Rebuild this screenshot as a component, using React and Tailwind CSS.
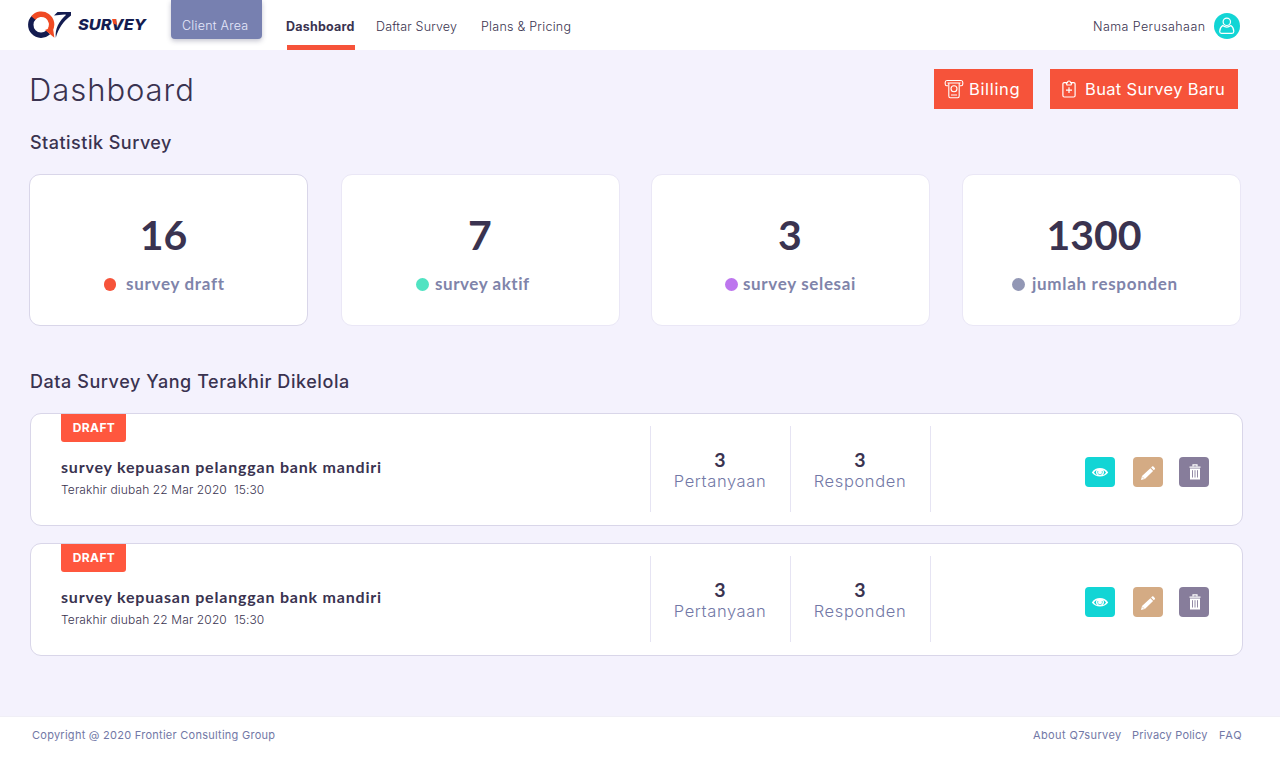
const inter = "font-['Inter',sans-serif]";
const lato = "font-['Lato',sans-serif]";

function Logo() {
  return (
    <svg width="120" height="28" viewBox="27 11 120 28" className="block shrink-0" aria-label="Q7 Survey">
      <g fill="none" strokeWidth="5.4">
        <path d="M34 17.4A10.3 10.3 0 1 0 48.2 32.4" stroke="#141c50" />
        <path d="M33.3 18A10.3 10.3 0 0 1 50 30" stroke="#f04a23" />
      </g>
      <path d="M45 30L52.8 27L54.4 37.8Z" fill="#f04a23" />
      <path d="M54 15.4L57.5 12H71V15.4C63.5 21 58.2 28.5 55.8 37.8C54.8 29 59 21 66.2 14.8L64.5 14.6Z" fill="#141c50" />
      <text x="78" y="30.2" textLength="68" lengthAdjust="spacingAndGlyphs" fontFamily="Inter, sans-serif" fontStyle="italic" fontWeight="800" fontSize="14.8" fill="#141c50">SURVEY</text>
      <path d="M112.2 19H116.2L117 25L113.2 23.4Z" fill="#f04a23" />
    </svg>
  );
}

function BillingIcon() {
  return (
    <svg width="20" height="20" viewBox="0 0 20 20" fill="none" stroke="white" strokeWidth="1.1">
      <path d="M4 6.8H2.8C1.8 6.8 1.2 6.2 1.2 5V3.5C1.2 2.2 1.8 1.5 3 1.5H17C18.2 1.5 18.8 2.2 18.8 3.5V5C18.8 6.2 18.2 6.8 17.2 6.8H16M3.5 4H16.5M4.8 4V17C4.8 18.2 5.3 18.7 6.2 18.7H13.8C14.7 18.7 15.2 18.2 15.2 17V4M7 16H13" />
      <circle cx="10" cy="9.8" r="3" />
    </svg>
  );
}

function ClipboardIcon() {
  return (
    <svg width="14" height="18" viewBox="0 0 14 18" fill="none" stroke="white" strokeWidth="1.2">
      <path d="M4.5 2.6H2.3C1.4 2.6.9 3.1.9 4V15.5C.9 16.4 1.4 17 2.3 17H11.7C12.6 17 13.1 16.4 13.1 15.5V4C13.1 3.1 12.6 2.6 11.7 2.6H9.5M4 2.6L5 5H9L10 2.6H8.6C8.4 1.5 7.9 1 7 1S5.6 1.5 5.4 2.6ZM7 7.2V13M4 10.1H10" />
    </svg>
  );
}

function EyeIcon() {
  return (
    <svg width="18" height="12" viewBox="0 0 18 12">
      <path d="M.8 6.4C4.5.6 13.5.6 17.2 6.4C13.5 11.9 4.5 11.9.8 6.4Z" fill="white" />
      <path d="M3 6.4C3.8 5.1 4.6 4.4 5.6 3.9C4.4 6 5 8.3 6.4 9.1C5 8.6 4 7.7 3 6.4ZM15 6.4C14.2 5.1 13.4 4.4 12.4 3.9C13.6 6 13 8.3 11.6 9.1C13 8.6 14 7.7 15 6.4Z" fill="#12d5d5" />
      <path d="M6.9 5C6.1 6.9 7.2 8.6 9 8.6S11.9 6.9 11.1 5" fill="none" stroke="#12d5d5" strokeWidth=".7" />
    </svg>
  );
}

function PencilIcon() {
  return (
    <svg width="16" height="16" viewBox="0 0 16 16" fill="white" className="mt-[2px]">
      <path d="M1 15L2 11.1L10.4 3.2L13.1 5.9L4.9 14ZM11.1 2.5L12.1 1.5C12.5 1.1 13 1.1 13.4 1.5L14.8 2.9C15.2 3.3 15.2 3.8 14.8 4.2L13.8 5.2Z" />
      <path d="M2.1 11.6L4.4 13.9" stroke="#d4ab84" strokeWidth=".6" />
    </svg>
  );
}

function TrashIcon() {
  return (
    <svg width="12" height="16" viewBox="0 0 12 16" className="ml-[1px]">
      <path d="M4 2.5V.9H8V2.5" fill="none" stroke="white" strokeWidth="1.2" />
      <path d="M.5 2.4H11.5V3.8H.5ZM1 4.5H11V15.5H1Z" fill="white" />
      <path d="M3.5 6.2V13.5M6 6.2V13.5M8.5 6.2V13.5" stroke="#877d9b" strokeWidth=".9" />
    </svg>
  );
}

function Stat({ value, label, dot, border, gap, shift, labelClass, valueClass }) {
  return (
    <div className={`h-[152px] w-[279px] shrink-0 rounded-[11px] border bg-white pt-[35px] ${border}`}>
      <div className={`text-center text-[41px] leading-[50px] font-bold text-[#3a3350] ${lato} ${valueClass}`}>{value}</div>
      <div className={`mt-[12px] flex h-[24px] items-center ${gap} ${shift}`}>
        <span className={`h-[13px] rounded-full ${dot}`} />
        <span className={`text-[17px] leading-[24px] font-bold whitespace-nowrap text-[#7f84aa] ${lato} ${labelClass}`}>{label}</span>
      </div>
    </div>
  );
}

function Metric({ label, labelClass }) {
  return (
    <div className="flex h-[86px] w-[140px] flex-col items-center border-l border-[#e6e4f3] pt-[23px]">
      <span className={`mr-[1px] text-[19.5px] leading-[22px] font-bold text-[#3a3350] ${lato}`}>3</span>
      <span className={`mr-[1px] text-[16.5px] leading-[20px] font-light text-[#7278a6] ${labelClass}`}>{label}</span>
    </div>
  );
}

function SurveyRow() {
  return (
    <article className="flex h-[113px] w-[1213px] rounded-[11px] border border-[#d9d6e9] bg-white pl-[30px]">
      <div className="w-[589px]">
        <div className="flex h-[28px] w-[65px] items-center justify-center rounded-b-[3px] bg-[#ff573e] pl-[1px] text-[12px] font-bold tracking-[0.4px] text-white">DRAFT</div>
        <h3 className={`mt-[14px] text-[16px] leading-[22px] font-bold tracking-[0.8px] text-[#3a3350] ${lato}`}>survey kepuasan pelanggan bank mandiri</h3>
        <p className="mt-[2px] text-[12px] leading-[20px] font-light tracking-[0.12px] whitespace-pre text-[#3a3350]">Terakhir diubah 22 Mar 2020  15:30</p>
      </div>
      <div className="flex pt-[12px]">
        <Metric label="Pertanyaan" labelClass="tracking-[0.6px]" />
        <Metric label="Responden" labelClass="tracking-[0.62px]" />
        <div className="h-[86px] border-l border-[#e6e4f3]" />
      </div>
      <div className="flex pt-[43px] pl-[154px]">
        <button className="flex size-[30px] items-center justify-center rounded-[4px] bg-[#12d5d5]"><EyeIcon /></button>
        <button className="ml-[18px] flex size-[30px] items-center justify-center rounded-[4px] bg-[#d4ab84]"><PencilIcon /></button>
        <button className="ml-[16px] flex size-[30px] items-center justify-center rounded-[4px] bg-[#877d9b]"><TrashIcon /></button>
      </div>
    </article>
  );
}

export default function App() {
  return (
    <div className={`flex h-[757px] w-[1280px] flex-col overflow-hidden bg-[#f4f2fd] text-[#3a3350] ${inter}`}>
      <header className="flex h-[50px] shrink-0 items-start bg-white pl-[27px]">
        <div className="w-[144px] pt-[11px]"><Logo /></div>
        <div className="h-[39px] w-[91px] rounded-b-[4px] bg-[#7780b0] pt-[16px] pl-[11px] text-[12.5px] leading-[20px] font-light tracking-[0.25px] whitespace-nowrap text-[#e6e8fb] shadow-[0_2px_5px_rgba(60,60,100,0.3)]">Client Area</div>
        <nav className="flex h-[50px] pt-[17px] text-[12.5px] leading-[20px] whitespace-nowrap">
          <span className="ml-[25px] h-[33px] w-[68px] border-b-[5px] border-[#f6533a] font-bold"><span className="-ml-px tracking-[0.22px]">Dashboard</span></span>
          <span className="ml-[21px] w-[105px] font-light tracking-[0.15px]">Daftar Survey</span>
          <span className="w-[90px] font-light tracking-[0.25px]">Plans &amp; Pricing</span>
        </nav>
        <div className="ml-auto flex items-start pt-[13px] pr-[40px]">
          <span className="mt-[4px] mr-[8.6px] text-[12.5px] leading-[20px] font-light tracking-[0.4px]">Nama Perusahaan</span>
          <svg width="26" height="26" viewBox="0 0 26 26" fill="none" stroke="white" strokeWidth="1.2">
            <circle cx="13" cy="13" r="13" fill="#12d5d5" stroke="none" />
            <circle cx="12.8" cy="8.8" r="3.7" />
            <path d="M8.7 12.5C6.8 13.8 5.7 16 5.7 18.5C5.7 19.7 6.3 20.3 7.5 20.3H18C19.2 20.3 19.8 19.7 19.8 18.5C19.8 16 18.8 13.8 16.9 12.5C14.5 14.3 11.1 14.3 8.7 12.5Z" />
          </svg>
        </div>
      </header>

      <main className="h-[666px] shrink-0 pl-[29px]">
        <div className="flex h-[78px] items-start pt-[19px] pr-[42px]">
          <h1 className="mt-[1px] text-[31px] leading-[40px] font-light tracking-[0.95px]">Dashboard</h1>
          <button className="ml-auto flex h-[40px] w-[99px] items-center bg-[#f6533a] pl-[10px] text-[16.5px] tracking-[0.65px] whitespace-nowrap text-white"><BillingIcon /><span className="ml-[5px]">Billing</span></button>
          <button className="ml-[17px] flex h-[40px] w-[188px] items-center bg-[#f6533a] pl-[12px] text-[16.5px] tracking-[0.33px] whitespace-nowrap text-white"><ClipboardIcon /><span className="ml-[9px]">Buat Survey Baru</span></button>
        </div>
        <h2 className="mt-[3px] ml-[1px] text-[18px] leading-[24px] font-medium tracking-[0.48px]">Statistik Survey</h2>
        <section className="mt-[19px] flex">
          <Stat value="16" label="survey draft" dot="w-[12px] bg-[#f6533a]" border="border-[#d9d6e9]" gap="gap-[10px]" shift="pl-[74px]" labelClass="tracking-[0.7px]" valueClass="pr-[10px]" />
          <div className="w-[33px]" />
          <Stat value="7" label="survey aktif" dot="w-[13px] bg-[#50e3c2]" border="border-[#eae7f6]" gap="gap-[6px]" shift="pl-[74px]" labelClass="tracking-[0.55px]" valueClass="pr-[1px]" />
          <div className="w-[31px]" />
          <Stat value="3" label="survey selesai" dot="w-[13px] bg-[#bd76ee]" border="border-[#eae7f6]" gap="gap-[5px]" shift="pl-[73px]" labelClass="tracking-[0.65px]" valueClass="pr-[1px]" />
          <div className="w-[32px]" />
          <Stat value="1300" label="jumlah responden" dot="w-[13px] bg-[#9297b5]" border="border-[#eae7f6]" gap="gap-[7px]" shift="pl-[49px]" labelClass="tracking-[0.7px]" valueClass="pr-[15px]" />
        </section>
        <h2 className="mt-[44px] ml-[1px] text-[18px] leading-[24px] font-medium tracking-[0.56px]">Data Survey Yang Terakhir Dikelola</h2>
        <section className="mt-[19px] ml-[1px] flex flex-col gap-[17px]">
          <SurveyRow />
          <SurveyRow />
        </section>
      </main>

      <footer className="flex h-[41px] items-start border-t border-[#f0eff6] bg-white pt-[9px] pl-[32px] text-[11px] leading-[18px] whitespace-nowrap text-[#7278a6]">
        <span className="tracking-[0.26px]">Copyright @ 2020 Frontier Consulting Group</span>
        <span className="ml-auto w-[99px] tracking-[0.38px]">About Q7survey</span>
        <span className="w-[87px] tracking-[0.2px]">Privacy Policy</span>
        <span className="w-[61px] tracking-[0.8px]">FAQ</span>
      </footer>
    </div>
  );
}
